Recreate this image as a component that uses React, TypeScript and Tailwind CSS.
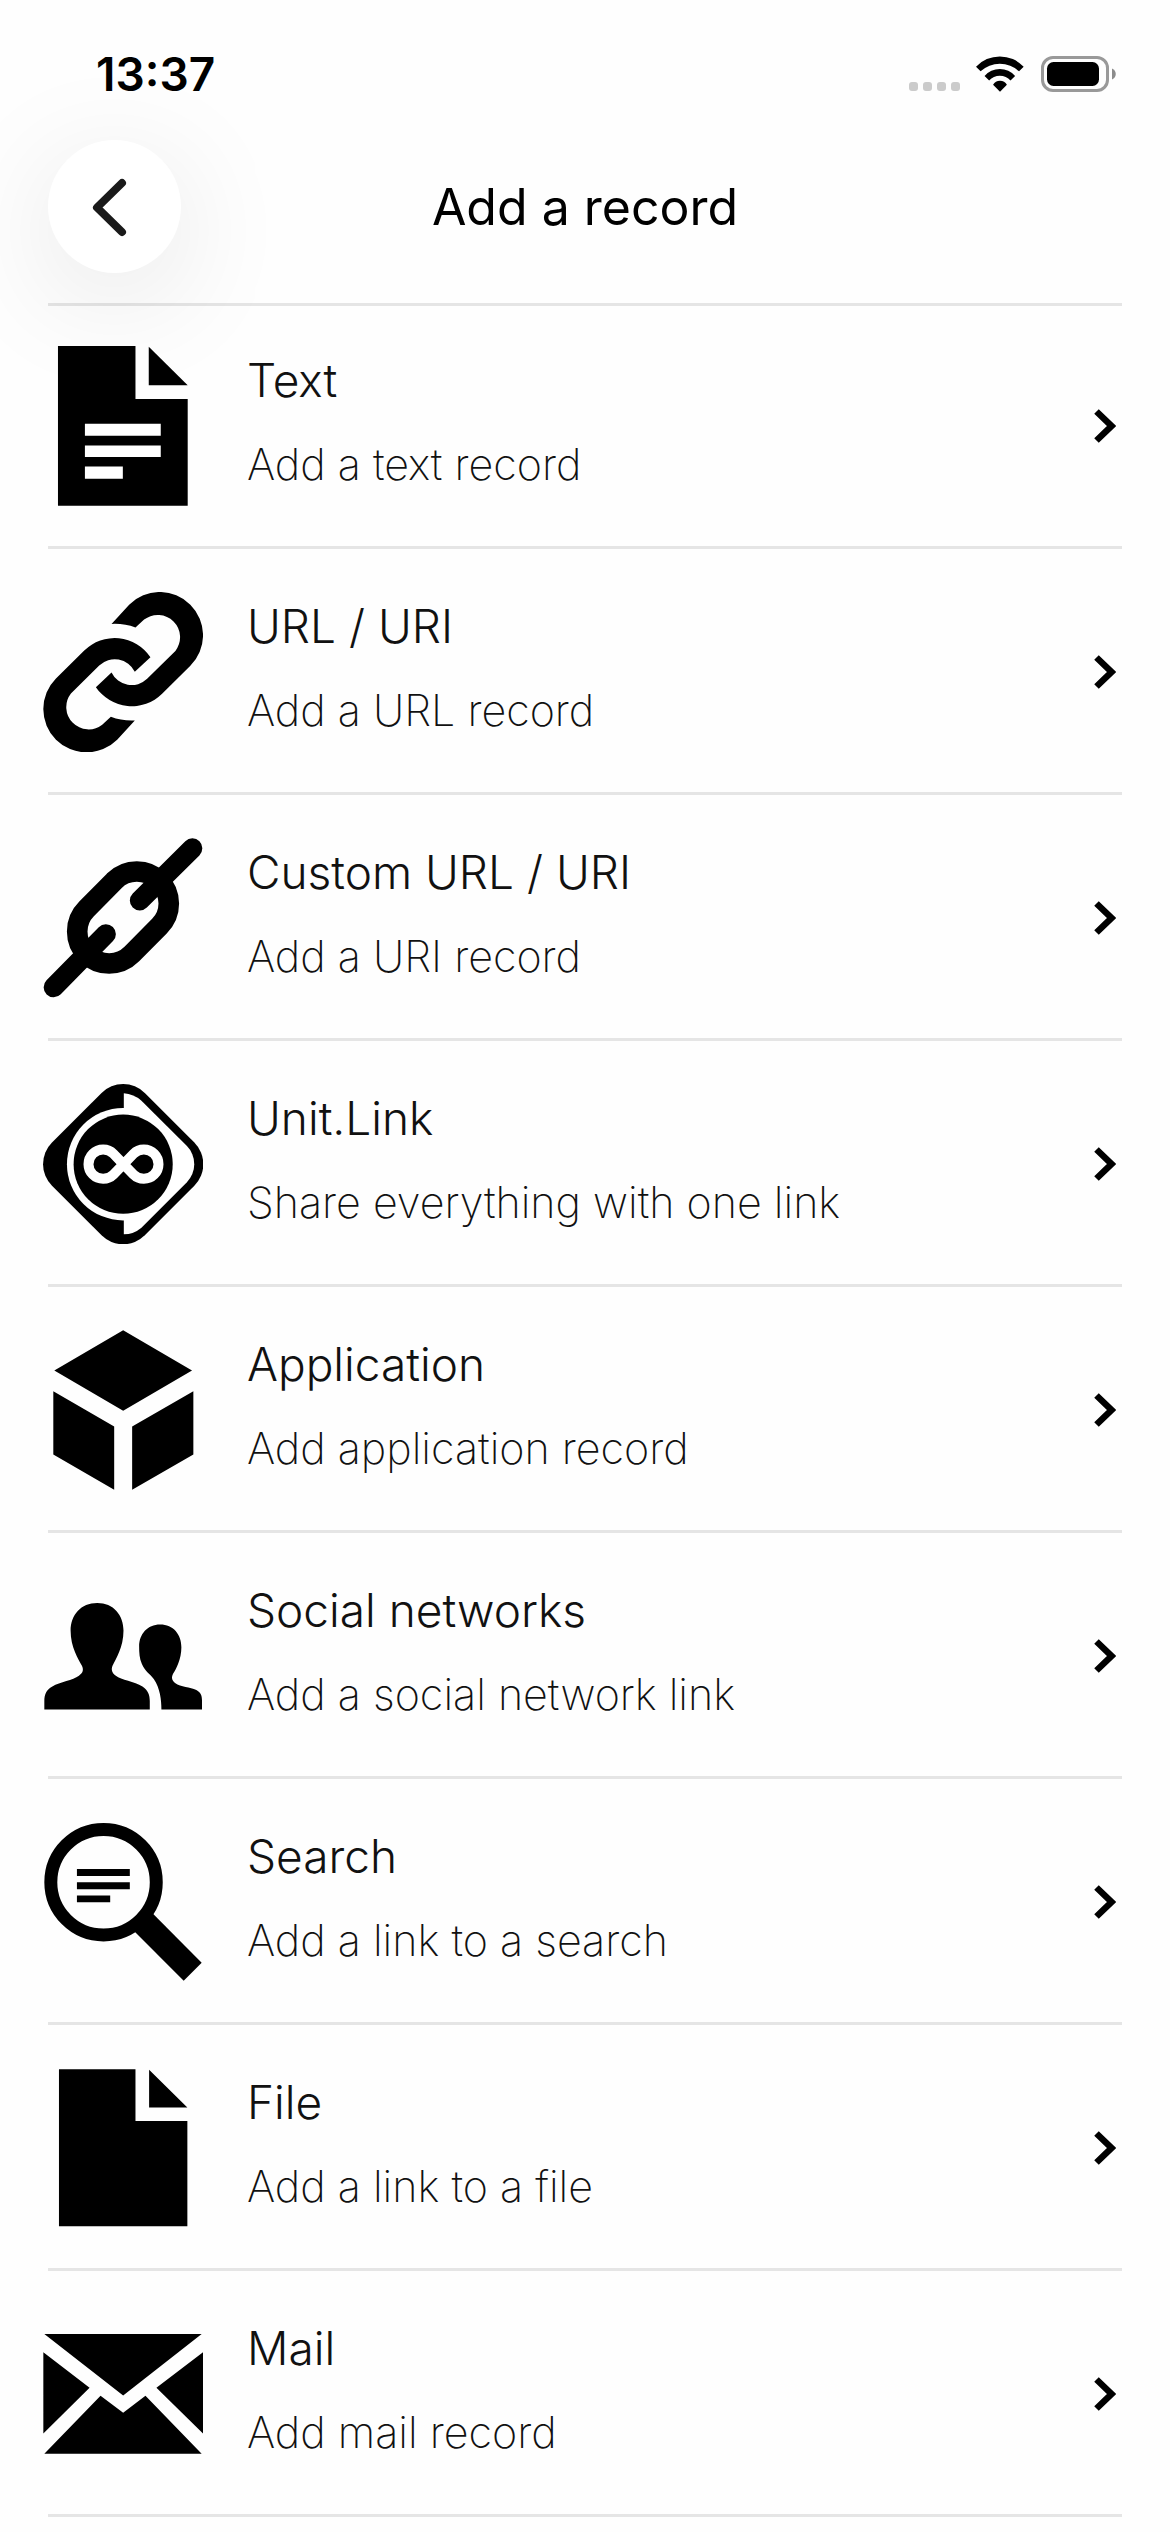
import type { ReactNode } from "react";

type RecordType = {
  title: string;
  description: string;
  icon: ReactNode;
};

const linkHalf =
  "M206 96L259 38A130 130 0 0 1 443 222L358 306A130 130 0 0 1 159 286L206 242A67 67 0 0 0 313 261L398 177A67 67 0 0 0 304 83L278 107Q244 94 206 96Z";

const records: RecordType[] = [
  {
    title: "Text",
    description: "Add a text record",
    icon: (
      <>
        <path d="M45 0H278V159H435V480H45Z" />
        <path d="M318 2L435 118H318Z" />
        <path fill="#fff" d="M126 234H354V270H126ZM126 299H354V334H126ZM126 362H240V399H126Z" />
      </>
    ),
  },
  {
    title: "URL / URI",
    description: "Add a URL record",
    icon: (
      <>
        <path d={linkHalf} />
        <path d={linkHalf} transform="rotate(180 241 241)" />
      </>
    ),
  },
  {
    title: "Custom URL / URI",
    description: "Add a URI record",
    icon: (
      <g fill="none" stroke="currentColor">
        <path strokeWidth="62" d="M214 129A96 96 0 0 1 350 265L267 349A96 96 0 0 1 131 213Z" />
        <path strokeWidth="60" strokeLinecap="round" d="M449 31L291 188M189 289L32 449" />
      </g>
    ),
  },
  {
    title: "Unit.Link",
    description: "Share everything with one link",
    icon: (
      <>
        <path d="M176 27A92 92 0 0 1 306 27L455 176A92 92 0 0 1 455 306L306 455A92 92 0 0 1 176 455L27 306A92 92 0 0 1 27 176Z" />
        <path fill="#fff" d="M243 28Q272 30 296 50L432 186A78 78 0 0 1 432 296L296 432Q272 452 243 452Z" />
        <circle cx="241" cy="241" r="169" fill="#fff" />
        <circle cx="241" cy="241" r="149" />
        <path
          fill="none"
          stroke="#fff"
          strokeWidth="30"
          d="M242 241L212 210A44 44 0 1 0 212 272L272 210A44 44 0 1 1 272 272Z"
        />
      </>
    ),
  },
  {
    title: "Application",
    description: "Add application record",
    icon: (
      <path d="M241 1L448 122L241 243L34 122ZM31 184L214 290V480L31 374ZM452 184L268 290V480L452 374Z" />
    ),
  },
  {
    title: "Social networks",
    description: "Add a social network link",
    icon: (
      <>
        <path d="M163 81C212 81 242 117 242 164C242 215 219 249 209 270C204 283 208 292 219 300C235 313 275 317 299 332C316 343 321 358 321 376V401H4V376C4 356 10 342 28 332C52 318 90 314 108 300C120 291 123 283 117 270C106 249 83 215 83 164C83 117 114 81 163 81Z" />
        <path d="M352 146C392 146 416 176 416 214C416 250 401 278 391 294C385 306 388 314 397 322C415 335 442 334 461 343C474 350 478 360 478 374V401H356C356 372 352 338 333 310C322 294 307 288 297 264C290 248 289 230 289 212C289 175 314 146 352 146Z" />
      </>
    ),
  },
  {
    title: "Search",
    description: "Add a link to a search",
    icon: (
      <>
        <circle cx="182" cy="181" r="158.5" fill="none" stroke="currentColor" strokeWidth="39" />
        <path d="M102 141H261V162H102ZM102 181H261V202H102ZM102 221H202V241H102Z" />
        <path d="M315 260L477 423L423 477L260 314Z" />
      </>
    ),
  },
  {
    title: "File",
    description: "Add a link to a file",
    icon: <path d="M48 4H278V159H434V476H48ZM319 5L434 119H319Z" />,
  },
  {
    title: "Mail",
    description: "Add mail record",
    icon: (
      <path d="M4 60H477L241 245ZM1 115L140 222L1 359ZM481 115L341 222L481 359ZM4 420L173 246L241 297L308 246L477 420Z" />
    ),
  },
];

function StatusBar() {
  return (
    <div className="flex items-center justify-between pt-14 pl-24 pr-[54px]">
      <span className="text-[46px] leading-9 font-semibold text-black">13:37</span>
      <div className="flex h-9 items-center">
        {/* No cellular signal */}
        <div className="flex gap-[5px] self-end pb-px">
          {[0, 1, 2, 3].map((i) => (
            <span key={i} className="size-[9px] rounded-[3px] bg-[#cbcbcb]" />
          ))}
        </div>
        <svg viewBox="0 0 146 108" className="ml-4 h-9 w-12 self-start" aria-hidden="true">
          <path d="M0 32A99 99 0 0 1 145 32L131 46A86 86 0 0 0 14 46Z" />
          <path d="M26 60A61 61 0 0 1 119 60L105 74A43 43 0 0 0 40 74Z" />
          <path d="M52 87A24 24 0 0 1 94 87L73 108Z" />
        </svg>
        <svg viewBox="0 0 75 36" className="ml-[17px] h-9 w-[75px]" aria-hidden="true">
          <rect x="1.5" y="1.5" width="65" height="33" rx="10.5" fill="none" stroke="#999" strokeWidth="3" />
          <rect x="6" y="6" width="52" height="24" rx="6.5" />
          <path fill="#8c8c8c" d="M71 12.500C76 14.500 76 21.500 71 23.500Z" />
        </svg>
      </div>
    </div>
  );
}

function Header() {
  return (
    <header className="grid grid-cols-[1fr_auto_1fr] items-center px-12 pt-12 pb-[30px]">
      <button
        type="button"
        aria-label="Back"
        className="flex size-[133px] items-center justify-center rounded-full bg-white shadow-[0_24px_120px_rgba(0,0,0,0.1)]"
      >
        <svg viewBox="0 0 133 133" className="size-full" aria-hidden="true">
          <path
            d="M74 43L49 67.500L74 92"
            fill="none"
            stroke="#1a1a1a"
            strokeWidth="8"
            strokeLinecap="round"
            strokeLinejoin="round"
          />
        </svg>
      </button>
      <h1 className="text-[50px] leading-16 font-normal text-black">Add a record</h1>
    </header>
  );
}

function RecordRow({ record }: { record: RecordType }) {
  return (
    <li>
      <a href="#" className="flex h-60 items-center gap-11 pl-[43px] pr-[54px]">
        <svg viewBox="0 0 481 481" fill="currentColor" className="size-40 shrink-0 text-black" aria-hidden="true">
          {record.icon}
        </svg>
        <div className="flex grow flex-col gap-7 pb-2 text-[#111]">
          <span className="text-[46px] leading-14 font-light">{record.title}</span>
          <span className="text-[43px] leading-14 font-extralight">{record.description}</span>
        </div>
        <svg viewBox="0 0 22 34" className="h-[34px] w-[22px] shrink-0" aria-hidden="true">
          <path d="M2.500 2.500L17.500 17L2.500 31.500" fill="none" stroke="#000" strokeWidth="6.5" />
        </svg>
      </a>
      <div className="mx-12 mb-[3px] h-[3px] bg-[#e5e5e5]" />
    </li>
  );
}

export default function App() {
  return (
    <div className="min-h-screen overflow-hidden bg-[#fefefe] font-[Inter,sans-serif]">
      <StatusBar />
      <Header />
      <main>
        <div className="mx-12 h-[3px] bg-[#e5e5e5]" />
        <ul>
          {records.map((record) => (
            <RecordRow key={record.title} record={record} />
          ))}
        </ul>
      </main>
    </div>
  );
}
